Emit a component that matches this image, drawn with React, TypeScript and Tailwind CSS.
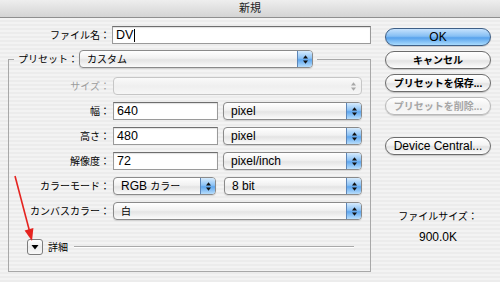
import clsx from 'clsx';
import { ReactNode } from 'react';

// tiny up/down arrows used inside the aqua popups
const Arrows = ({ dim }: { dim?: boolean }) => (
  <svg width="7" height="11" viewBox="0 0 7 11">
    <path d="M3.5 1.2 L6 4.6 L1 4.6 Z" className={dim ? 'fill-[#a8a8a8]' : 'fill-[#111]'} />
    <path d="M3.5 9.8 L6 6.4 L1 6.4 Z" className={dim ? 'fill-[#a8a8a8]' : 'fill-[#111]'} />
  </svg>
);

const Popup = ({ value, className, disabled }: { value?: ReactNode; className?: string; disabled?: boolean }) => (
  <div
    className={clsx(
      'flex h-[18px] items-stretch rounded-[4px] border',
      disabled
        ? 'border-[#c6c6c6] bg-[linear-gradient(#fafafa,#efefef_50%,#f6f6f6)]'
        : 'border-[#8a8a8a] bg-[linear-gradient(#ffffff,#f1f1f1_45%,#e4e4e4_55%,#fbfbfb)] shadow-[0_1px_1px_rgba(0,0,0,0.12)]',
      className
    )}
  >
    <span className="flex-1 truncate pl-[7px] leading-[16px]">{value}</span>
    <span
      className={clsx(
        'flex w-[15px] items-center justify-center rounded-r-[3px]',
        disabled
          ? ''
          : 'border-l border-[#5d86b8] bg-[linear-gradient(#d6ebfd,#8cc2f5_45%,#5ea6ee_55%,#b8defc)]'
      )}
    >
      <Arrows dim={disabled} />
    </span>
  </div>
);

const Field = ({ children, className }: { children?: ReactNode; className?: string }) => (
  <div
    className={clsx(
      'flex h-[18px] items-center border border-[#9a9a9a] border-t-[#6e6e6e] bg-white pl-[3px] text-[12.5px] shadow-[inset_0_1px_1px_rgba(0,0,0,0.12)]',
      className
    )}
  >
    {children}
  </div>
);

const Btn = ({ children, primary, disabled, cjk }: { children: ReactNode; primary?: boolean; disabled?: boolean; cjk?: boolean }) => (
  <div
    className={clsx(
      'flex h-[18px] items-center justify-center rounded-full border shadow-[0_1px_1px_rgba(0,0,0,0.18)]',
      cjk ? 'text-[10px] font-bold' : 'text-[12px]',
      primary
        ? 'border-[#3e5f86] bg-[linear-gradient(#c6e2fd,#86bff4_45%,#58a2ec_55%,#a9dbfd)]'
        : disabled
        ? 'border-[#b8b8b8] bg-[linear-gradient(#ffffff,#f2f2f2_50%,#f8f8f8)] text-[#a6a6a6]'
        : 'border-[#6c6c6c] bg-[linear-gradient(#ffffff,#f3f3f3_45%,#e3e3e3_55%,#fdfdfd)]'
    )}
  >
    {children}
  </div>
);

const Label = ({ children, dim }: { children: ReactNode; dim?: boolean }) => (
  <span className={clsx('w-[101px] shrink-0 text-right text-[10px]', dim && 'text-[#9c9c9c]')}>{children}</span>
);

export default function App() {
  return (
    <div className="relative h-[282px] w-[500px] overflow-hidden bg-[repeating-linear-gradient(180deg,#ececec_0px,#ececec_2px,#f3f3f3_2px,#f3f3f3_4px)] font-['Liberation_Sans','Noto_Sans_CJK_JP',sans-serif] text-[12px] text-black">
      {/* title bar */}
      <div className="flex h-[18px] items-center justify-center border-b border-[#8f8f8f] bg-[linear-gradient(#eeeeee,#d4d4d4)] text-[11px] text-[#222]">
        新規
      </div>

      <div className="flex pl-[8px] pt-[8px]">
        {/* left side */}
        <div className="w-[363px]">
          <div className="flex h-[18px] items-center">
            <span className="w-[102px] shrink-0 text-right text-[10px]">ファイル名：</span>
            <Field className="ml-[2px] flex-1">
              DV<span className="ml-[1px] h-[13px] w-[1px] bg-black" />
            </Field>
          </div>

          <fieldset className="mt-[6px] border border-[#a8a8a8] px-0 pb-[16px] pt-[9px]">
            <legend className="ml-[5px] pr-[4px]">
              <div className="flex items-center">
                <span className="pl-[4px] pr-[1px] text-[10px]">プリセット：</span>
                <Popup className="w-[234px]" value={<span className="text-[10px]">カスタム</span>} />
              </div>
            </legend>

            <div className="flex flex-col gap-[7px] pr-[8px]">
              <div className="flex items-center">
                <Label dim>サイズ：</Label>
                <Popup className="ml-[3px] flex-1" disabled />
              </div>
              <div className="flex items-center">
                <Label>幅：</Label>
                <Field className="ml-[3px] w-[105px]">640</Field>
                <Popup className="ml-[5px] flex-1" value="pixel" />
              </div>
              <div className="flex items-center">
                <Label>高さ：</Label>
                <Field className="ml-[3px] w-[105px]">480</Field>
                <Popup className="ml-[5px] flex-1" value="pixel" />
              </div>
              <div className="flex items-center">
                <Label>解像度：</Label>
                <Field className="ml-[3px] w-[105px]">72</Field>
                <Popup className="ml-[5px] flex-1" value="pixel/inch" />
              </div>
              <div className="flex items-center">
                <Label>カラーモード：</Label>
                <Popup
                  className="ml-[3px] w-[103px]"
                  value={
                    <>
                      RGB <span className="text-[10px]">カラー</span>
                    </>
                  }
                />
                <Popup className="ml-[8px] flex-1" value="8 bit" />
              </div>
              <div className="flex items-center">
                <Label>カンバスカラー：</Label>
                <Popup className="ml-[3px] flex-1" value={<span className="text-[10px]">白</span>} />
              </div>
            </div>

            <div className="mt-[19px] flex h-[16px] items-center pl-[18px] pr-[16px]">
              <div className="flex h-[16px] w-[16px] items-center justify-center rounded-[3px] border border-[#7c7c7c] bg-[linear-gradient(#ffffff,#ececec_50%,#f8f8f8)]">
                <svg width="8" height="6" viewBox="0 0 8 6">
                  <path d="M0.5 1 L7.5 1 L4 5.5 Z" className="fill-black" />
                </svg>
              </div>
              <span className="ml-[5px] text-[10px]">詳細</span>
              <div className="ml-[6px] h-[2px] flex-1 border-t border-b border-t-[#a9a9a9] border-b-white" />
            </div>
          </fieldset>
        </div>

        {/* right side */}
        <div className="ml-[14px] mt-[2px] flex w-[106px] flex-col gap-[5px]">
          <Btn primary>OK</Btn>
          <Btn cjk>キャンセル</Btn>
          <Btn cjk>プリセットを保存...</Btn>
          <Btn cjk disabled>プリセットを削除...</Btn>
          <div className="mt-[17px]">
            <Btn>Device Central...</Btn>
          </div>
          <div className="mt-[50px] text-center text-[10px] leading-[14px]">ファイルサイズ：</div>
          <div className="mt-[1px] text-center text-[12px] leading-[14px]">900.0K</div>
        </div>
      </div>

      {/* red annotation arrow */}
      <svg className="pointer-events-none absolute left-0 top-0" width="500" height="282">
        <line x1="15" y1="176" x2="29.5" y2="231" stroke="#e52420" strokeWidth="1.6" />
        <path d="M32 241 L24.6 230.4 L33.4 228 Z" fill="#e52420" />
      </svg>
    </div>
  );
}
